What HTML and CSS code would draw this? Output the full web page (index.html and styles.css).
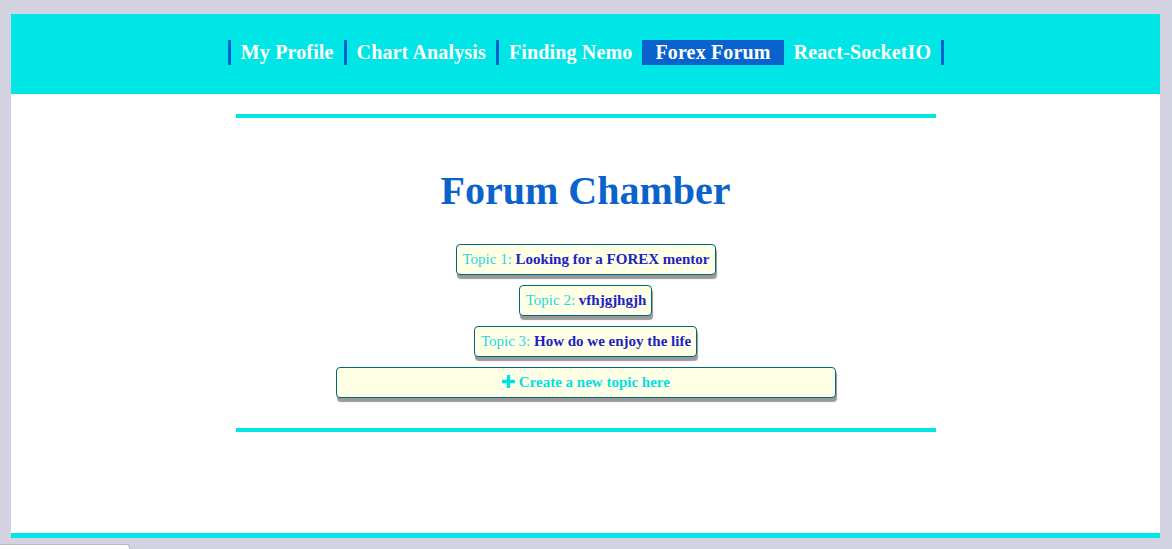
FILE: index.html
```html
<!DOCTYPE html>
<html>
<head>
<meta charset="utf-8">
<title>Forum Chamber</title>
<link rel="stylesheet" href="styles.css">
</head>
<body>
<div class="page">
  <header class="header">
    <nav class="nav">
      <a class="nav-item" href="#">My Profile</a>
      <a class="nav-item" href="#">Chart Analysis</a>
      <a class="nav-item" href="#">Finding Nemo</a>
      <a class="nav-item active" href="#">Forex Forum</a>
      <a class="nav-item last" href="#">React-SocketIO</a>
    </nav>
  </header>
  <main class="main">
    <div class="rule"></div>
    <h1 class="title">Forum Chamber</h1>
    <div class="topics">
      <a class="topic" href="#"><span class="topic-num">Topic 1:</span> <b class="topic-name">Looking for a FOREX mentor</b></a>
      <a class="topic" href="#"><span class="topic-num">Topic 2:</span> <b class="topic-name">vfhjgjhgjh</b></a>
      <a class="topic" href="#"><span class="topic-num">Topic 3:</span> <b class="topic-name">How do we enjoy the life</b></a>
      <a class="topic create" href="#"><svg class="plus" viewBox="0 0 14 14" width="13" height="13"><path d="M5.2 0h3.6v5.2H14v3.6H8.8V14H5.2V8.8H0V5.2h5.2z" fill="#00e0e6"/></svg> Create a new topic here</a>
    </div>
    <div class="rule"></div>
  </main>
</div>
<div class="status"></div>
</body>
</html>
```

FILE: styles.css
```css
html, body {
  margin: 0;
  padding: 0;
}
body {
  background: #d3d2e0;
  font-family: "Liberation Serif", "Times New Roman", serif;
  height: 549px;
  overflow: hidden;
}
.page {
  margin: 14px 12px 0 11px;
  background: #ffffff;
  border-bottom: 5px solid #00e6e6;
}
.header {
  height: 80px;
  background: #00e6e6;
  display: flex;
  align-items: center;
  justify-content: center;
}
.nav {
  display: flex;
  margin-left: 1px;
  margin-top: -3px;
}
.nav-item {
  display: block;
  height: 25px;
  line-height: 25px;
  padding: 0 10px 0 10px;
  border-left: 3px solid #0a62cc;
  color: #ffffff;
  font-weight: bold;
  font-size: 20px;
  letter-spacing: 0.15px;
  text-decoration: none;
}
.nav-item.last {
  border-right: 3px solid #0a62cc;
}
.nav-item.active {
  background: #0a62cc;
}
.main {
  height: 439px;
  display: flex;
  flex-direction: column;
  align-items: center;
  padding-top: 20px;
  box-sizing: border-box;
}
.rule {
  width: 700px;
  height: 4px;
  background: #00e6e6;
  flex: none;
}
.title {
  margin: 50px 0 30px 0;
  font-size: 40px;
  line-height: 46px;
  color: #0a62cc;
  font-weight: bold;
}
.topics {
  display: flex;
  flex-direction: column;
  align-items: center;
  gap: 10px;
  margin-bottom: 30px;
}
.topic {
  display: block;
  box-sizing: border-box;
  height: 31px;
  line-height: 29px;
  padding: 0 5px 0 6px;
  border: 1px solid #00667a;
  border-radius: 4px;
  background: #ffffe6;
  box-shadow: 1px 4px 1px #9a9a9a;
  font-size: 15px;
  text-decoration: none;
  white-space: nowrap;
}
.topic-num {
  color: #1ed8e0;
}
.topic-name {
  color: #1c22c4;
}
.create {
  width: 500px;
  text-align: center;
  color: #00e0e6;
  font-weight: bold;
}
.plus {
  vertical-align: -1px;
}
.status {
  position: fixed;
  left: 0;
  top: 544px;
  width: 129px;
  height: 10px;
  background: #ffffff;
  border-top: 1px solid #b8b8c0;
  border-right: 1px solid #b8b8c0;
  border-top-right-radius: 4px;
}
```
